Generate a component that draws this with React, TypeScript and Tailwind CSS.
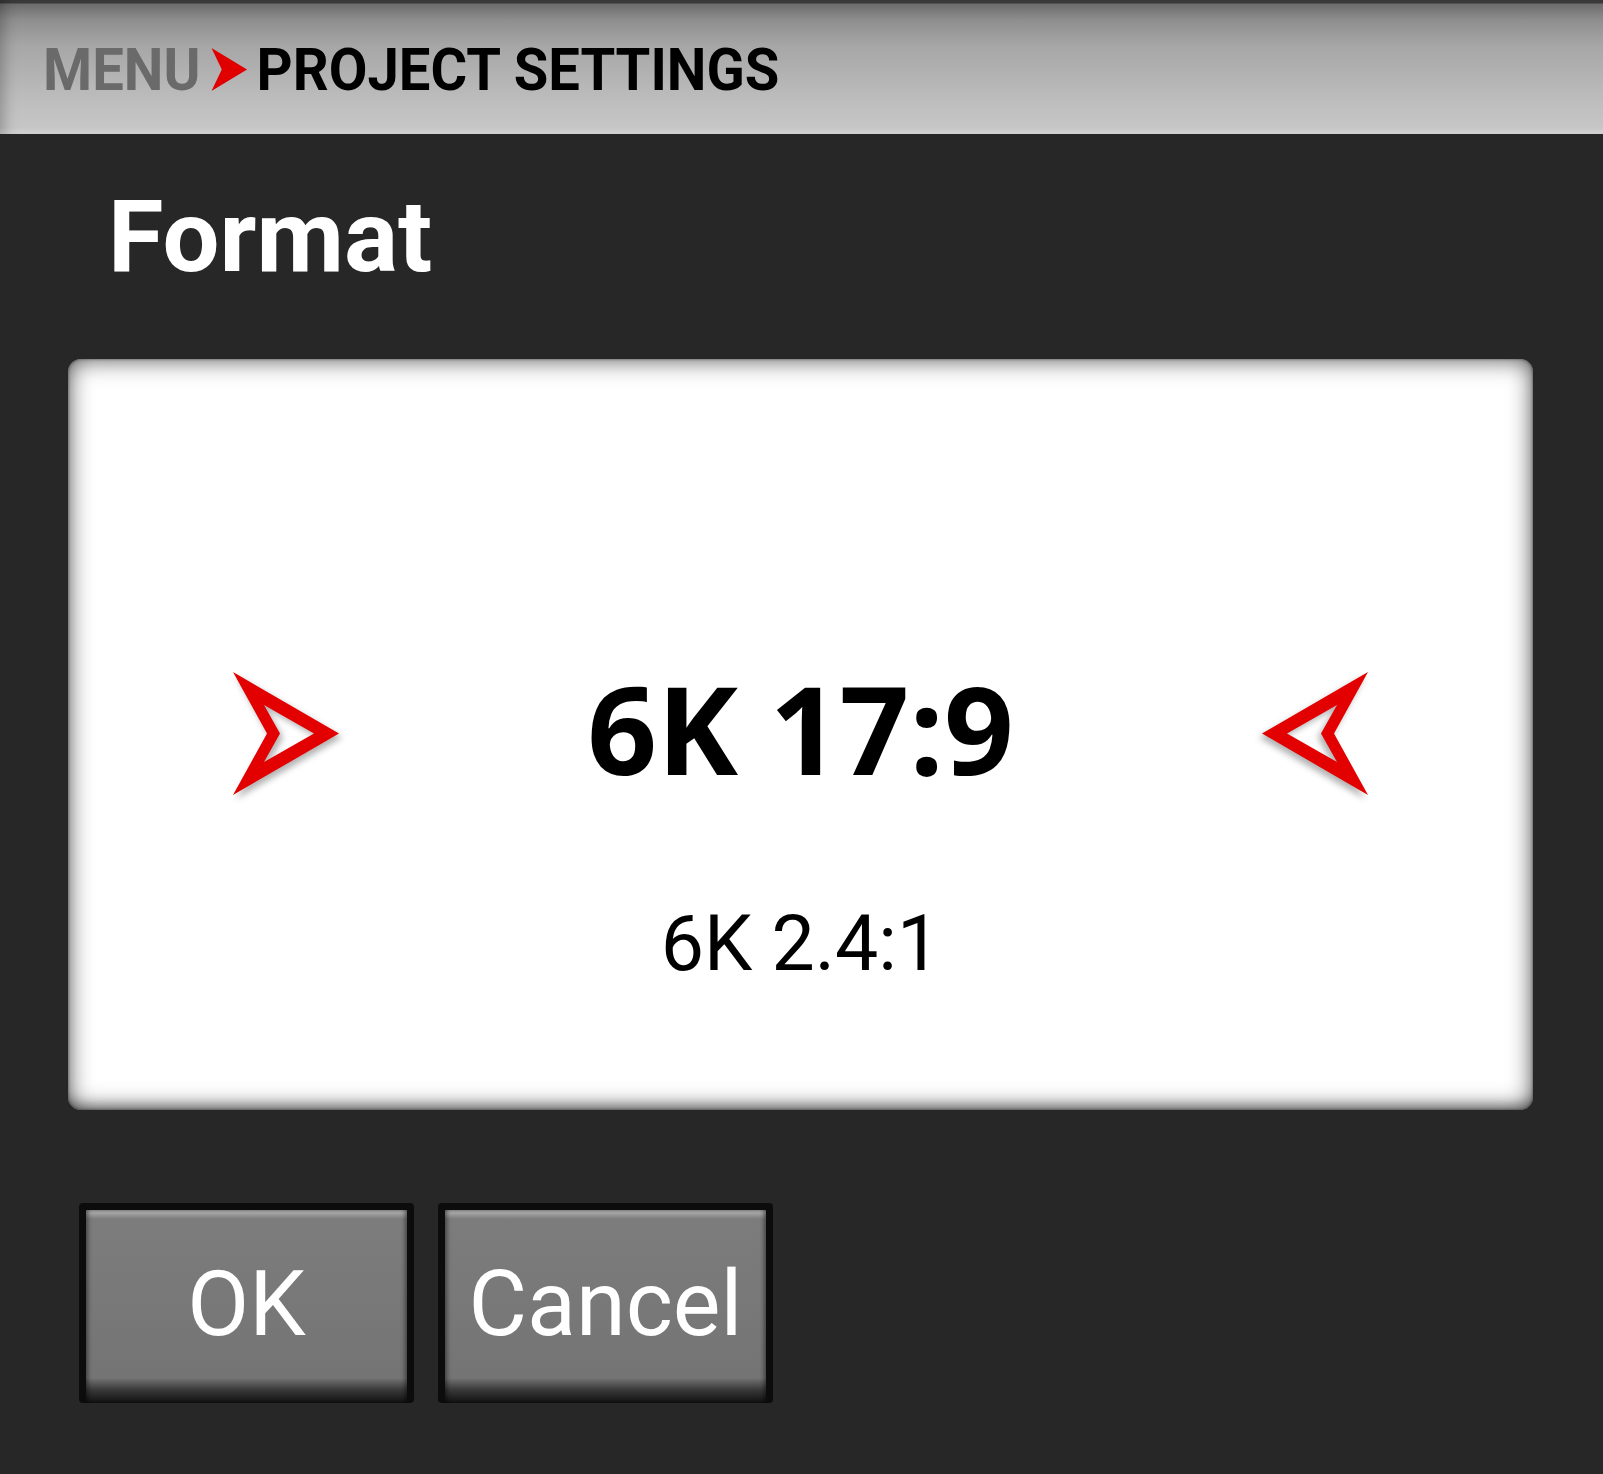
import React from "react";

function Arrow({ flip }: { flip?: boolean }) {
  return (
    <svg
      width="106"
      height="124"
      viewBox="0 0 106 124"
      className={"drop-shadow-[3px_4px_3px_rgba(0,0,0,0.3)] " + (flip ? "-scale-x-100" : "")}
    >
      <path
        fillRule="evenodd"
        fill="#e30000"
        d="M0 0 L106 61.5 L0 123 L34 61.5 Z M31 33 L81 61.5 L31 90 L47 61.5 Z"
      />
    </svg>
  );
}

function Btn({ label }: { label: string }) {
  return (
    <div className="w-[335px] h-[200px] bg-[#0c0c0c] rounded-[4px] px-[7px] pt-[7px] flex">
      <div className="flex-1 flex items-center justify-center bg-[linear-gradient(to_bottom,#8c8c8c_0px,#a4a4a4_3px,#7c7c7c_9px,#787878_50%,#747474_87%,#3a3a3a_93%,#101010_100%)] shadow-[inset_5px_0_4px_-3px_rgba(0,0,0,0.45),inset_-5px_0_4px_-3px_rgba(0,0,0,0.45)]">
        <span className="text-white text-[90px] leading-none font-['Roboto',sans-serif] font-normal -mt-[4px]">
          {label}
        </span>
      </div>
    </div>
  );
}

export default function App() {
  return (
    <div className="w-[1603px] h-[1474px] bg-[#272727] flex flex-col overflow-hidden">
      <div className="h-[134px] shrink-0 bg-[linear-gradient(to_bottom,#3a3a3a_0px,#3a3a3a_3px,#6c6c6c_4px,#8e8e8e_20px,#a6a6a6_45px,#bdbdbd_100px,#c6c6c6_128px,#d2d2d2_132px,#d2d2d2_134px)] shadow-[inset_14px_0_14px_-10px_rgba(0,0,0,0.25)] pl-[43px] pt-[40px]">
        <div className="flex items-start origin-left scale-x-[0.936] font-['Roboto',sans-serif] font-bold text-[60px] leading-none">
          <span className="text-[#6a6a6a]">MENU</span>
          <svg width="38" height="43" viewBox="0 0 38 43" className="ml-[12px] mt-[8px]">
            <path d="M0 0 L38 21.5 L0 43 L11 21.5 Z" fill="#e00000" />
          </svg>
          <span className="text-black ml-[10px]">PROJECT SETTINGS</span>
        </div>
      </div>

      <div className="pl-[108px] mt-[52px] text-white font-['Roboto',sans-serif] font-bold text-[101px] leading-none">
        Format
      </div>

      <div className="ml-[68px] mt-[72px] w-[1465px] h-[751px] bg-white rounded-[13px] shadow-[inset_0_0_24px_rgba(0,0,0,0.7),inset_0_0_3px_rgba(0,0,0,0.5),inset_0_-8px_12px_-4px_rgba(0,0,0,0.3)] flex flex-col pt-[308px]">
        <div className="flex items-start px-[165px]">
          <div className="mt-[5px]">
            <Arrow />
          </div>
          <div className="flex-1 text-center text-black font-['Open_Sans',sans-serif] font-bold text-[122px] leading-none">
            6K 17:9
          </div>
          <div className="mt-[5px]">
            <Arrow flip />
          </div>
        </div>
        <div className="mt-[110px] text-center text-black font-['Roboto',sans-serif] font-normal text-[77px] leading-none">
          6K 2.4:1
        </div>
      </div>

      <div className="flex gap-[24px] ml-[79px] mt-[93px]">
        <Btn label="OK" />
        <Btn label="Cancel" />
      </div>
    </div>
  );
}
